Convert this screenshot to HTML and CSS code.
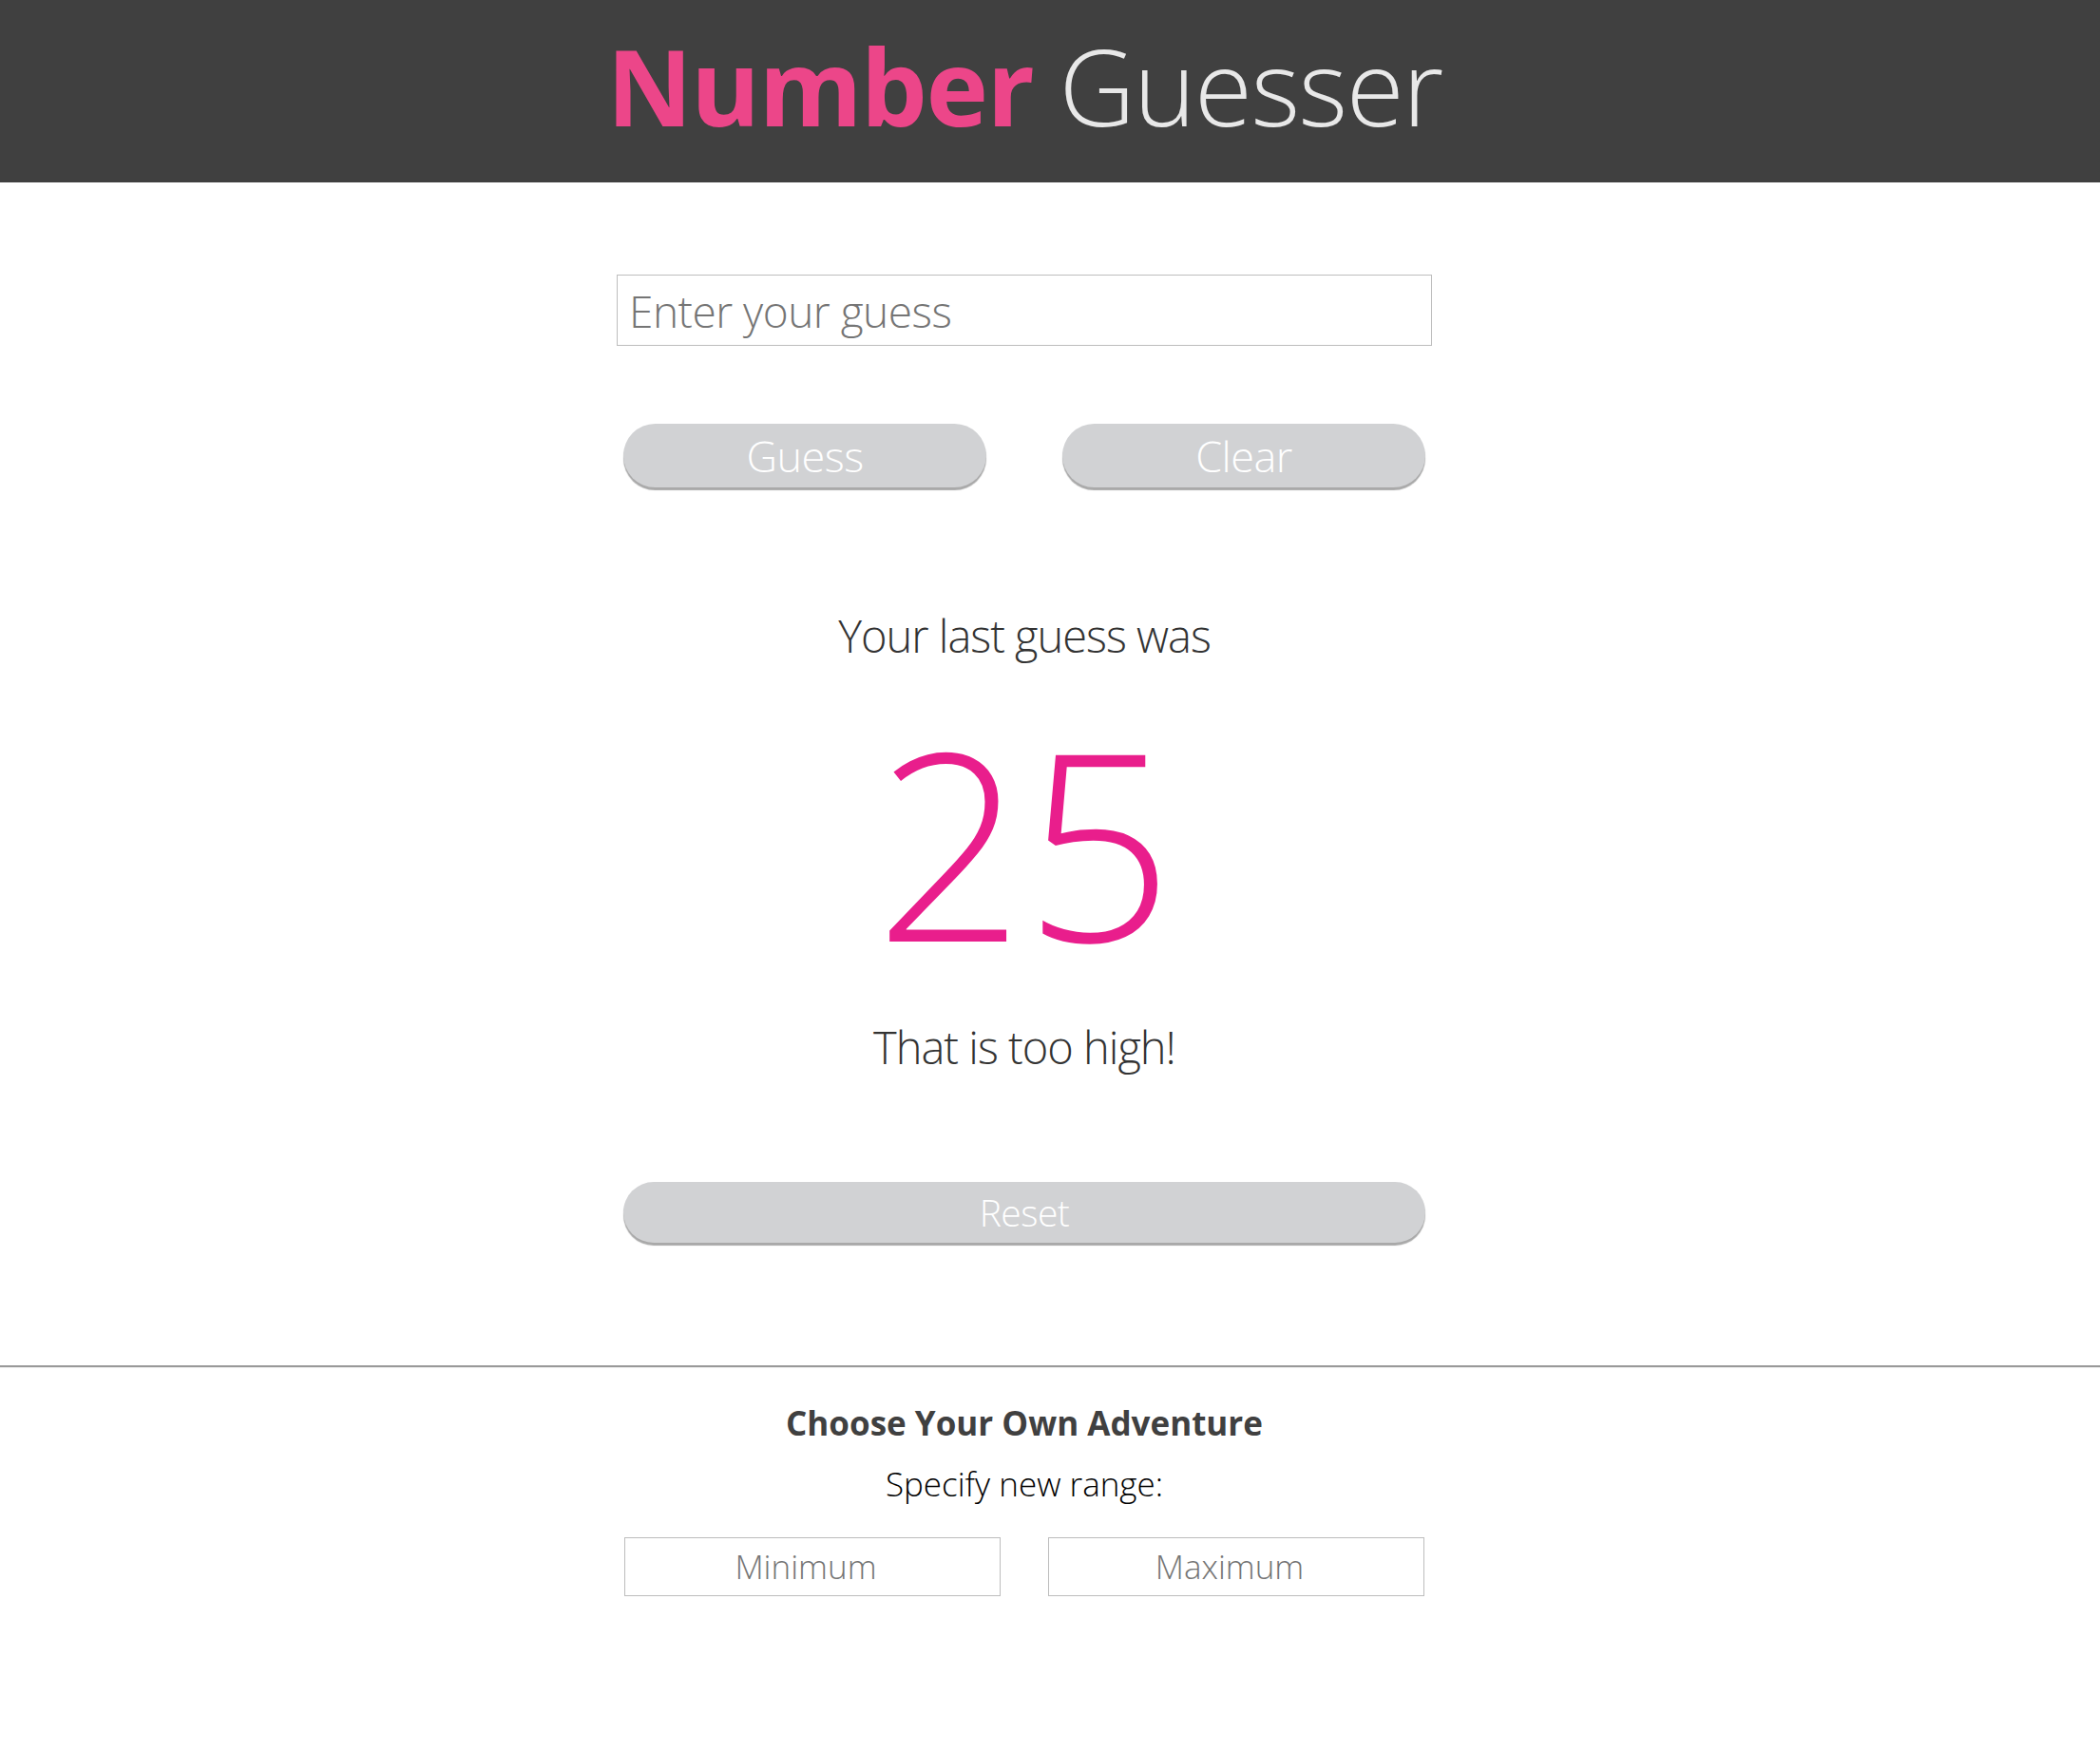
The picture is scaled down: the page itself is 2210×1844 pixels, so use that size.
FILE: index.html
```html
<!DOCTYPE html>
<html lang="en">
<head>
<meta charset="utf-8">
<title>Number Guesser</title>
<link rel="stylesheet" href="styles.css">
</head>
<body>
<header class="top-bar">
  <div class="wrap">
    <h1 class="title"><span class="title-strong">Number</span> <span class="title-light">Guesser</span></h1>
  </div>
</header>
<div class="wrap">
  <main class="game">
    <input class="guess-input" type="text" placeholder="Enter your guess">
    <div class="guess-actions">
      <button class="pill" type="button">Guess</button>
      <button class="pill" type="button">Clear</button>
    </div>
    <p class="last-label">Your last guess was</p>
    <p class="last-number">25</p>
    <p class="feedback">That is too high!</p>
    <button class="pill pill-wide" type="button">Reset</button>
  </main>
</div>
<hr class="divider">
<div class="wrap">
  <section class="range">
    <h2 class="range-title">Choose Your Own Adventure</h2>
    <p class="range-label">Specify new range:</p>
    <div class="range-inputs">
      <input class="range-input" type="text" placeholder="Minimum">
      <input class="range-input" type="text" placeholder="Maximum">
    </div>
  </section>
</div>
</body>
</html>
```
FILE: styles.css
```css
* { box-sizing: border-box; }
html, body { margin: 0; padding: 0; background: #fff; }
body { font-family: "Open Sans", "Liberation Sans", sans-serif; color: #404040; }

.wrap { width: 2156px; display: flex; flex-direction: column; align-items: center; }

.top-bar { background: #404040; height: 192px; }
.top-bar .wrap { height: 192px; justify-content: center; padding-bottom: 12px; }
.title { margin: 0; font-size: 111px; line-height: 1; letter-spacing: -1.6px; white-space: nowrap; }
.title-strong { color: #ec4689; font-weight: 700; }
.title-light { color: #e8e8e8; font-weight: 300; }

.game { width: 858px; display: flex; flex-direction: column; align-items: center; padding-top: 97px; }

.guess-input {
  width: 858px; height: 75px; border: 1px solid #bdbdbd; padding: 0 12px;
  font-family: inherit; font-weight: 300; font-size: 46px; letter-spacing: -0.5px; color: #404040; outline: none;
}
.guess-input::placeholder, .range-input::placeholder { color: #757575; opacity: 1; }

.guess-actions { width: 844px; display: flex; justify-content: space-between; margin-top: 82px; }

.pill {
  border: 0; border-radius: 40px; background: #d1d2d4; color: #fff;
  font-family: inherit; font-weight: 300; font-size: 45px; line-height: 1; letter-spacing: -0.5px;
  width: 382px; height: 67px; padding: 0;
  box-shadow: 0 3px 1px #a9a9a9;
}
.pill-wide { width: 844px; height: 64px; font-size: 39px; margin-top: 113px; }

.last-label, .feedback { margin: 0; font-size: 47px; font-weight: 300; line-height: 1.2; letter-spacing: -1px; color: #333; }
.last-label { margin-top: 128px; }
.last-number { margin: 50px 0 0; font-size: 275px; font-weight: 300; line-height: 1; color: #e91e8c; }
.feedback { margin-top: 52px; }

.divider { margin: 129px 0 0; border: 0; border-top: 2px solid #999; border-bottom: 1px solid #f2f2f2; height: 0; }

.range { width: 844px; display: flex; flex-direction: column; align-items: center; }
.range-title { margin: 37px 0 0; font-size: 35px; font-weight: 700; line-height: 1.2; color: #404040; }
.range-label { margin: 22px 0 0; font-size: 35px; font-weight: 300; line-height: 1.2; color: #000; }
.range-inputs { width: 842px; display: flex; justify-content: space-between; margin-top: 35px; }
.range-input {
  width: 396px; height: 62px; border: 1px solid #bdbdbd; text-align: center;
  font-family: inherit; font-weight: 300; font-size: 35px; color: #404040; outline: none; padding: 0 14px 0 0;
}
```
